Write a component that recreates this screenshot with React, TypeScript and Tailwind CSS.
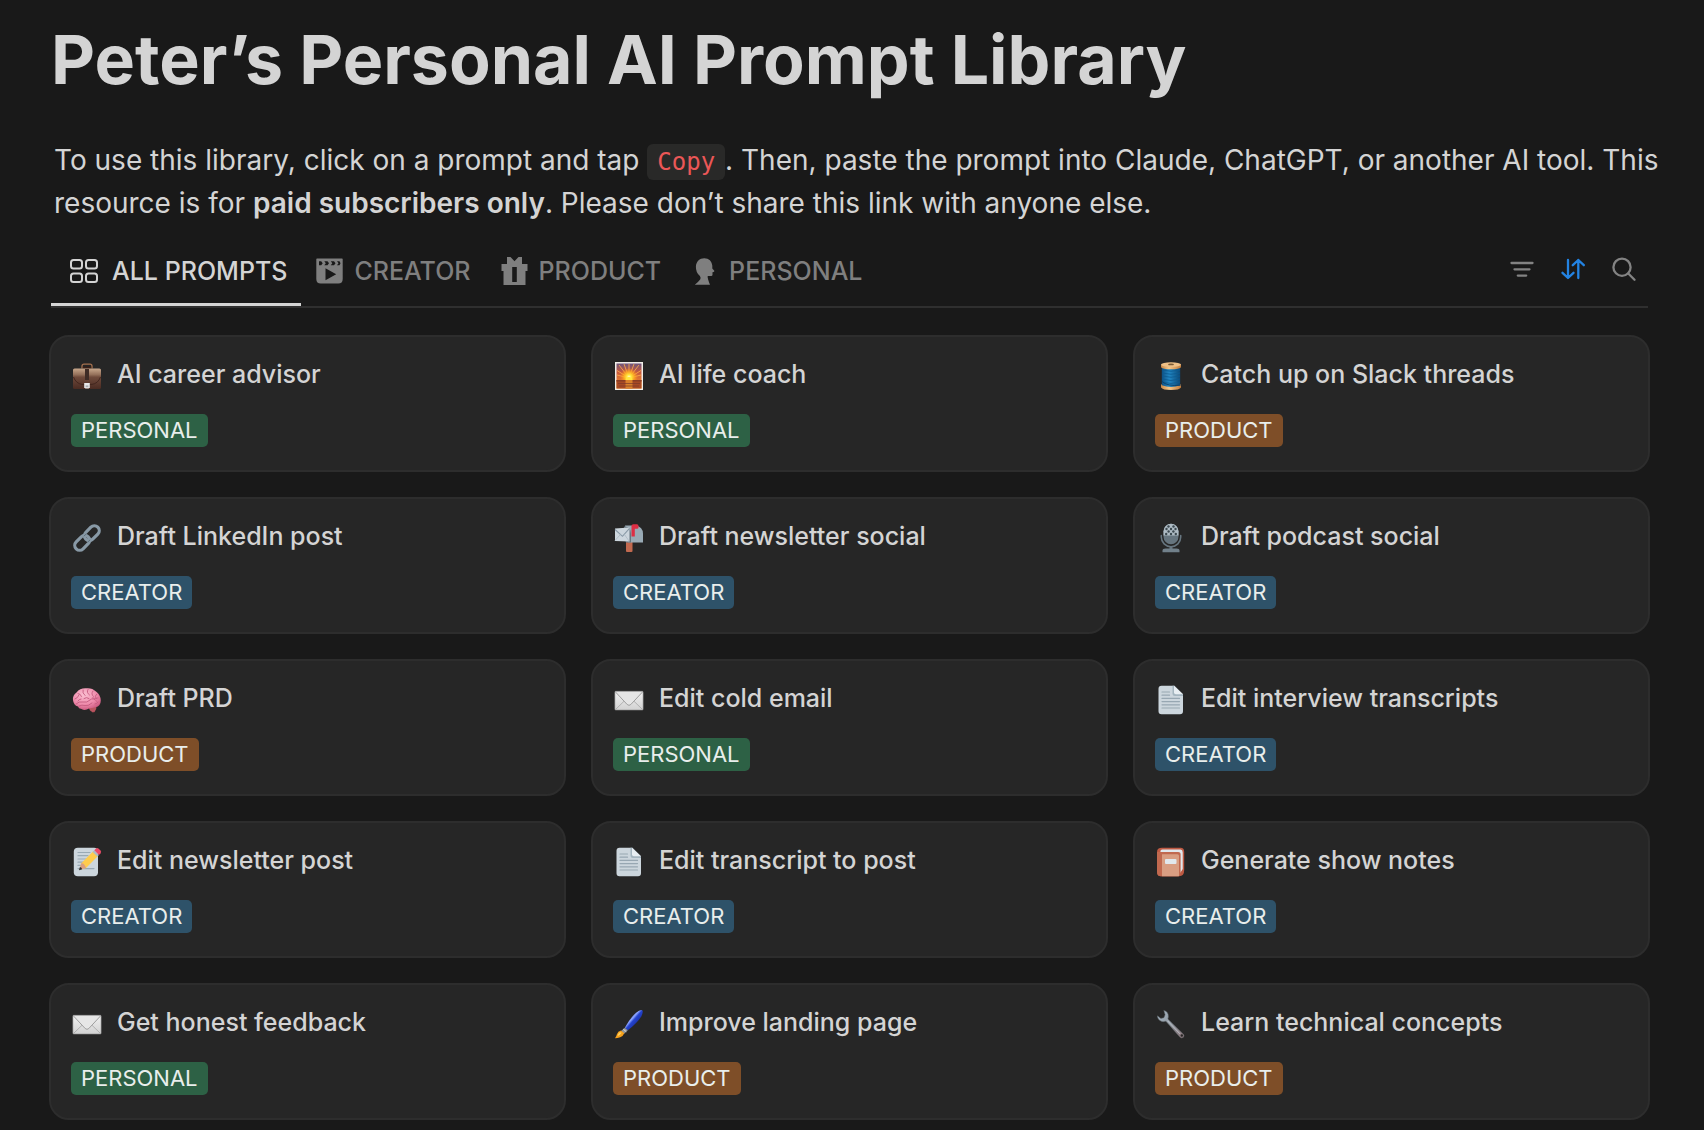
import { useState, type ReactNode } from "react";

type Tag = "PERSONAL" | "CREATOR" | "PRODUCT";

function Emoji({ label, children }: { label: string; children: ReactNode }) {
  return (
    <svg role="img" aria-label={label} viewBox="0 0 30 30" className="mt-1 size-[30px] shrink-0">
      {children}
    </svg>
  );
}

function Briefcase() {
  return (
    <Emoji label="Briefcase">
      <defs>
        <linearGradient id="bc-body" x1="0" y1="0" x2="0" y2="1">
          <stop offset="0" stopColor="#c9a88c" />
          <stop offset=".3" stopColor="#94705a" />
          <stop offset=".42" stopColor="#6f4a3b" />
          <stop offset="1" stopColor="#4a2b22" />
        </linearGradient>
      </defs>
      <path d="M10 7.500V5.200Q10 3.200 12 3.200h6q2 0 2 2v2.300" fill="none" stroke="#a5714f" strokeWidth="1.300" />
      <path d="M10.800 5.600h8.400v2h-8.400z" fill="#3b2017" />
      <rect x="1" y="7.500" width="28" height="20.500" rx="1.600" fill="url(#bc-body)" />
      <path d="M1.500 16Q4 22.600 10 23.400h10q6-.8 8.500-7.400" fill="none" stroke="#3f241c" strokeWidth=".9" />
      <path d="M13 8h4v11h-4z" fill="#3f2c26" />
      <path d="M12.200 22h5.600v4.200l-1.200 1.300h-3.200l-1.200-1.300z" fill="#e9e9ea" />
      <path d="M13.600 24.400h2.800v1.800h-2.800z" fill="#aeb0b3" />
    </Emoji>
  );
}

function Sunrise() {
  return (
    <Emoji label="Sunrise">
      <defs>
        <linearGradient id="sr-sky" x1="0" y1="0" x2="0" y2="1">
          <stop offset="0" stopColor="#6c547d" />
          <stop offset=".35" stopColor="#c9583c" />
          <stop offset="1" stopColor="#fb9a22" />
        </linearGradient>
        <radialGradient id="sr-sun" cx=".5" cy=".5" r=".5">
          <stop offset="0" stopColor="#fffbd0" />
          <stop offset=".25" stopColor="#ffe83b" />
          <stop offset=".6" stopColor="#ffad20" stopOpacity=".8" />
          <stop offset="1" stopColor="#ff8a1e" stopOpacity="0" />
        </radialGradient>
      </defs>
      <rect x="1" y="1" width="28" height="28" fill="#f2eee8" />
      <rect x="2.500" y="2.500" width="25" height="25" fill="url(#sr-sky)" />
      <g stroke="#ffb04a" strokeWidth="1" opacity=".8">
        <path d="M15 17 3 14M15 17 3 9.500M15 17 5 4M15 17 10 3M15 17V3M15 17 20 3M15 17 25 4M15 17 27 9.500M15 17l12-3" />
      </g>
      <circle cx="15" cy="16" r="9" fill="url(#sr-sun)" />
      <path d="M2.500 19h25v8.500h-25z" fill="#a84a24" />
      <path d="M2.500 19h25v1.500h-25z" fill="#8a3d24" />
      <path d="M11.500 19h7v8.500h-7z" fill="#d9812b" />
      <path d="M4 22.500h22M5 25h20" stroke="#7b3a2a" strokeWidth=".7" />
      <path d="M11.500 18.900a3.500 3 0 0 1 7 0z" fill="#ffe53c" />
    </Emoji>
  );
}

function Thread() {
  return (
    <Emoji label="Thread">
      <defs>
        <linearGradient id="th-blue" x1="0" x2="1">
          <stop offset="0" stopColor="#0e4f82" />
          <stop offset=".4" stopColor="#2187c4" />
          <stop offset="1" stopColor="#0b4876" />
        </linearGradient>
        <linearGradient id="th-wood" x1="0" x2="1">
          <stop offset="0" stopColor="#c98745" />
          <stop offset=".4" stopColor="#f4c78a" />
          <stop offset="1" stopColor="#c07b3b" />
        </linearGradient>
      </defs>
      <path d="M5 23.500q10-3 20 0v3q-1.500 2.500-10 2.500T5 26.500z" fill="url(#th-wood)" />
      <path d="M5.800 5.500h18.400v18.800q-9.200 3.200-18.400 0z" fill="url(#th-blue)" />
      <path d="M6 9q9 2.500 18 0M6 12q9 2.500 18 0M6 15q9 2.500 18 0M6 18q9 3 18 0M6 21q9 3 18 0" fill="none" stroke="#0b5a92" strokeWidth=".8" />
      <path d="M6 20.500q5 5 18.600 3.700" fill="none" stroke="#0a3e66" strokeWidth=".9" />
      <path d="M5 3.500v2.700Q7 8.300 15 8.300t10-2.100V3.500z" fill="url(#th-wood)" />
      <ellipse cx="15" cy="3.600" rx="10" ry="2.400" fill="#efc086" />
      <ellipse cx="15" cy="3.400" rx="3" ry=".9" fill="#7b5a35" />
    </Emoji>
  );
}

function Link() {
  return (
    <Emoji label="Link">
      <g fill="none" stroke="#8899a6" strokeWidth="3.200">
        <rect x="-8.500" y="-4.900" width="17" height="9.800" rx="4.900" transform="translate(19.800 10.200) rotate(-45)" />
        <rect x="-8.500" y="-4.900" width="17" height="9.800" rx="4.900" transform="translate(10.200 19.800) rotate(-45)" />
      </g>
      <path d="m11.800 13.200 2.600-2.400M18.200 16.800l-2.600 2.400" stroke="#5f707c" strokeWidth="1" />
    </Emoji>
  );
}

function Mailbox() {
  return (
    <Emoji label="Mailbox">
      <path d="M12 19h6.500v9q0 1-1 1H13q-1 0-1-1z" fill="#c1694f" />
      <path d="M11 2.500h10.500Q29 3.500 29 11v8.500H14z" fill="#99aab5" />
      <path d="M10 3.500q7 0 7 7v9h-5q-3-8-2-16z" fill="#67757f" />
      <path d="M1 5.500 15.500 4.500v14L1 18z" fill="#ccd6dd" />
      <path d="m1 6.500 7.500 6.800 7-8" fill="none" stroke="#8899a6" strokeWidth="1.100" />
      <path d="m1 17.500 5.500-6M15 18l-4.500-6.500" stroke="#aab8c2" strokeWidth=".8" />
      <path d="M17.500 3q0-1.800 1.800-1.800H23q1.500 0 1.500 1.800v1.500q0 1.300-1.500 1.300h-2.200v7.700h-3.300z" fill="#dd2e44" />
    </Emoji>
  );
}

function Microphone() {
  const dots = [
    [12.500, 3.500], [17.500, 3.500], [10.500, 6], [15, 6], [19.500, 6],
    [12.600, 8.500], [17.400, 8.500], [10.200, 11], [15, 11], [19.800, 11],
  ];
  return (
    <Emoji label="Studio microphone">
      <rect x="7.500" y=".8" width="15" height="20.500" rx="7.500" fill="#66757f" />
      <path d="M7.500 12.500V8.300a7.500 7.500 0 0 1 15 0v4.200z" fill="#aebbc4" />
      {dots.map(([x, y]) => (
        <circle key={`${x}-${y}`} cx={x} cy={y} r="1.200" fill="#3c4950" />
      ))}
      <path d="M5.300 12.500V14a9.700 9.700 0 0 0 19.400 0v-1.500" fill="none" stroke="#66757f" strokeWidth="1.600" strokeLinecap="round" />
      <path d="M13.500 23h3v3h-3z" fill="#66757f" />
      <path d="M6.500 29.200v-1.500q0-2.200 3-2.200h11q3 0 3 2.200v1.500z" fill="#71808a" />
    </Emoji>
  );
}

function Brain() {
  return (
    <Emoji label="Brain">
      <defs>
        <radialGradient id="br-pink" cx=".4" cy=".3" r=".75">
          <stop offset="0" stopColor="#fbc0d2" />
          <stop offset=".6" stopColor="#ee8bab" />
          <stop offset="1" stopColor="#c9557c" />
        </radialGradient>
      </defs>
      <path d="M15.500 21.500q4 3 5 6l2.500-.5-1-5z" fill="#a7484f" />
      <path d="M17 22q4.500-2 7.500.5-.5 4-4 4.500-3.500-1-3.500-5z" fill="#b95560" />
      <path d="M1 15Q.5 10 4.500 7.500 8 3 14 3.300q6-.8 10 3.200 4.500 3 4.800 9 0 5.500-5.300 6.800-4 1-6.500 1.200Q13 26 9.500 24q-3-.2-3.500-2.600Q1.500 20.500 1 15z" fill="url(#br-pink)" />
      <g fill="none" stroke="#c55b80" strokeWidth=".9" strokeLinecap="round">
        <path d="M3 14q3-1 4-4M6 8.500q2.500 0 3.500 3M11 5q-1 3 2 5.500M16 4.500q-2 3 1.500 5.500M21 6q-2.500 3 .5 5.500M25 9q-3 2-.5 5" />
        <path d="M4 19q3-3 7-2t7-2 7 1.500M7 21q3-1.500 6-.5t7-2.500M12 13.500q2.500-2 5 0M9 14q-2 0-3 2M20.500 13q2 1 5.500 0M23 19q2 0 3-2" />
      </g>
    </Emoji>
  );
}

function Envelope() {
  return (
    <Emoji label="Envelope">
      <defs>
        <linearGradient id="en-paper" x1="0" y1="0" x2="0" y2="1">
          <stop offset="0" stopColor="#f1f1f1" />
          <stop offset="1" stopColor="#d2d2d2" />
        </linearGradient>
      </defs>
      <rect x=".9" y="6.300" width="28.200" height="18.700" rx=".8" fill="url(#en-paper)" stroke="#8f8f8f" strokeWidth=".6" />
      <path d="m1.500 24.500 9.800-9.500M28.500 24.500l-9.800-9.500" stroke="#a6a6a6" strokeWidth=".8" />
      <path d="m1.500 7 11.700 12.500q1.800 1.700 3.600 0L28.500 7" fill="#e6e6e6" stroke="#969696" strokeWidth=".9" />
    </Emoji>
  );
}

function Page() {
  return (
    <Emoji label="Page">
      <path d="M5.500.8h12.800l8.700 8.700v16.700q0 3-3 3H5.500q-3 0-3-3V3.800q0-3 3-3z" fill="#ccd6dd" />
      <path d="M16.500.8v7.700q0 2.500 2.500 2.500h8V9.500L18.300.8z" fill="#a4b5bf" />
      <path d="M18 .8v6.700q0 1.800 1.800 1.800H27z" fill="#e8eef2" />
      <path d="M6 7h7.500M6 10.200h7.500M6 13.400h17.500M6 16.600h17.500M6 19.800h17.500M6 23h17.500" stroke="#97a7b2" strokeWidth="1.200" strokeLinecap="round" />
    </Emoji>
  );
}

function Memo() {
  return (
    <Emoji label="Memo">
      <rect x="1.800" y=".8" width="24.200" height="28.400" rx="4" fill="#ccd6dd" />
      <path d="M6 5.500h12M6 8.700h10M6 12h10M6 15.200h7M6 18.400h4M6 21.600h16" stroke="#99aab5" strokeWidth="1.200" strokeLinecap="round" />
      <path d="m7.500 22.700 1.800-6.500L21.500 4l4.700 4.700L14 20.900z" fill="#ffcc4d" />
      <path d="m7.500 22.700 1.800-6.500q3-.5 4.700 4.700z" fill="#d99e82" />
      <path d="M7 23.200l.9-3.200q1.800.3 2.300 2.300z" fill="#292f33" />
      <path d="m20.600 4.900 1.700-1.700L27 7.900l-1.700 1.700z" fill="#aebbc4" />
      <path d="M22.300 3.200 24 1.500q1.300-1 2.700.2l1.800 1.800q1.200 1.300.1 2.700L27 7.900z" fill="#ea4a66" />
    </Emoji>
  );
}

function Notebook() {
  return (
    <Emoji label="Notebook">
      <path d="M6 .8h18.500q3.700 0 3.700 4V23q0 6.200-5 6.200H5q-4 0-4-4.500V5Q1 .8 6 .8z" fill="#be5a43" />
      <path d="M6.500 2.600h18q2.200 0 2.200 2.600V22l-2.500 4V5.800H4.500q-.5-3.200 2-3.200z" fill="#e1e8ed" />
      <path d="M4 5h18q2.500 0 2.500 2.500V26q0 3.200-3 3.200H5q-4 0-4-4.500V5z" fill="#c1694f" />
      <path d="M6 7.200h15.500q1.500 0 1.500 1.500v20.500H6z" fill="#d99e82" />
      <rect x="9" y="12" width="11.500" height="5" rx="1" fill="#e1e8ed" />
    </Emoji>
  );
}

function Paintbrush() {
  return (
    <Emoji label="Paintbrush">
      <defs>
        <linearGradient id="pb-blue" x1="0" y1="0" x2="1" y2="1">
          <stop offset=".2" stopColor="#1b2f9c" />
          <stop offset=".42" stopColor="#8ea6ff" />
          <stop offset=".5" stopColor="#2443d0" />
          <stop offset="1" stopColor="#0c1450" />
        </linearGradient>
      </defs>
      <path d="M28.300 1.300q1.200 1.500-1 6.200-4.500 7-13.500 13.800l-3-2.500Q16 9 22 3.700q4.800-3.900 6.300-2.400z" fill="url(#pb-blue)" />
      <path d="m10.800 18.800 3 2.500-3.600 3.400-3.200-2.700z" fill="#8f959b" />
      <path d="m9.300 20.200 3 2.500" stroke="#d8dcdf" strokeWidth="1" />
      <path d="M7 21.500 10.300 24.300q-1.200 3-4.100 4-2.800.8-5.200.9 1.400-1.700 1.900-4 .9-3 4.100-3.700z" fill="#f6a11d" />
      <path d="M5.800 23.200q-1.900 1.500-2.300 4 2.500-1.200 4.200-3.400z" fill="#ffd566" />
    </Emoji>
  );
}

function Wrench() {
  return (
    <Emoji label="Wrench">
      <defs>
        <linearGradient id="wr-steel" x1="0" y1="0" x2="1" y2="1">
          <stop offset="0" stopColor="#a9bccb" />
          <stop offset=".5" stopColor="#8d949b" />
          <stop offset="1" stopColor="#8b7377" />
        </linearGradient>
      </defs>
      <path d="M7.800 1.400q4.700 1.200 4.600 6-.1 1.500-.5 2.500l14.800 14.600q2.200 1.600.8 3.700-1.800 1.800-3.800-.3L9.900 12.200q-2 .8-4.200.2Q1.500 11 1.400 6.800l3.500 2.600 3-.7 1.200-3z" fill="url(#wr-steel)" stroke="#5a6065" strokeWidth=".5" />
      <path d="m11.500 11.800 12.500 13" stroke="#c9d1d8" strokeWidth=".8" />
      <circle cx="25.800" cy="26.500" r="1.200" fill="#262626" />
    </Emoji>
  );
}

const prompts: { title: string; tag: Tag; icon: () => ReactNode }[] = [
  { title: "AI career advisor", tag: "PERSONAL", icon: Briefcase },
  { title: "AI life coach", tag: "PERSONAL", icon: Sunrise },
  { title: "Catch up on Slack threads", tag: "PRODUCT", icon: Thread },
  { title: "Draft LinkedIn post", tag: "CREATOR", icon: Link },
  { title: "Draft newsletter social", tag: "CREATOR", icon: Mailbox },
  { title: "Draft podcast social", tag: "CREATOR", icon: Microphone },
  { title: "Draft PRD", tag: "PRODUCT", icon: Brain },
  { title: "Edit cold email", tag: "PERSONAL", icon: Envelope },
  { title: "Edit interview transcripts", tag: "CREATOR", icon: Page },
  { title: "Edit newsletter post", tag: "CREATOR", icon: Memo },
  { title: "Edit transcript to post", tag: "CREATOR", icon: Page },
  { title: "Generate show notes", tag: "CREATOR", icon: Notebook },
  { title: "Get honest feedback", tag: "PERSONAL", icon: Envelope },
  { title: "Improve landing page", tag: "PRODUCT", icon: Paintbrush },
  { title: "Learn technical concepts", tag: "PRODUCT", icon: Wrench },
];

const tagColors: Record<Tag, string> = {
  PERSONAL: "bg-[#2d6145]",
  CREATOR: "bg-[#2e5269]",
  PRODUCT: "bg-[#7e4e28]",
};

function GridIcon() {
  return (
    <svg viewBox="0 0 28 24" className="h-6 w-7" fill="none" stroke="currentColor" strokeWidth="2" aria-hidden="true">
      <rect x="1" y="1" width="11" height="8.500" rx="2.500" />
      <rect x="16" y="1" width="11" height="8.500" rx="2.500" />
      <rect x="1" y="14.500" width="11" height="8.500" rx="2.500" />
      <rect x="16" y="14.500" width="11" height="8.500" rx="2.500" />
    </svg>
  );
}

function ClapperIcon() {
  return (
    <svg viewBox="0 0 27 26" className="h-[26px] w-[27px]" aria-hidden="true">
      <path
        fill="currentColor"
        fillRule="evenodd"
        d="M1 .5h25q.7 0 .7.700V21q0 4.500-4.500 4.500H4.800Q.3 25.500.3 21V1.200Q.3.500 1 .500zM3 3.200v4h2.200l1.500-2-1.500-2zM8.300 3.200l1.500 2-1.500 2h3.200l1.500-2-1.500-2zM14.800 3.200l1.500 2-1.500 2H18l1.500-2-1.500-2zM21 3.200l1.500 2-1.500 2h2.500l1-2-1-2zM9.500 10.200v12l10.700-6z"
      />
    </svg>
  );
}

function GiftIcon() {
  return (
    <svg viewBox="0 0 27 28" className="h-7 w-[27px]" aria-hidden="true">
      <path
        fill="currentColor"
        fillRule="evenodd"
        d="M6 0h3.500l4 4.300L17.500 0H21v7h5.500v7H24.500v14h-22V14H.5V7H6zM11.200 10v15h4.600V10z"
      />
    </svg>
  );
}

function HeadIcon() {
  return (
    <svg viewBox="0 0 20 27" className="h-[27px] w-[27px]" aria-hidden="true">
      <path
        fill="currentColor"
        d="M9.800.3c4.600 0 7.700 3 8 7.500v2.600l2 2.400q.3.900-.8 1.200l-1 .2v2.500q0 1.300-1.400 1.300h-3.400q-.4 2.200 2.300 8.800H.3q3.700-3 5.500-5.600.8-1.500-.4-3.200Q1.200 14.800 1.400 8.600C1.600 3.600 5 .3 9.800.3z"
      />
    </svg>
  );
}

const tabs: { name: string; icon: () => ReactNode }[] = [
  { name: "ALL PROMPTS", icon: GridIcon },
  { name: "CREATOR", icon: ClapperIcon },
  { name: "PRODUCT", icon: GiftIcon },
  { name: "PERSONAL", icon: HeadIcon },
];

const strokeProps = {
  fill: "none",
  stroke: "currentColor",
  strokeWidth: 2.3,
  strokeLinecap: "round" as const,
  strokeLinejoin: "round" as const,
  viewBox: "0 0 24 24",
  className: "size-6",
  "aria-hidden": true,
};

export default function App() {
  const [active, setActive] = useState("ALL PROMPTS");
  const shown = prompts.filter((p) => active === "ALL PROMPTS" || p.tag === active);

  return (
    <main className="min-h-screen bg-[#191919] pt-[17px] pr-[54px] pb-2 pl-[49px] font-['Inter',sans-serif] text-[#d4d4d4]">
      <h1 className="pl-0.5 text-[68px] leading-[84px] font-bold">Peter’s Personal AI Prompt Library</h1>

      <p className="mt-[38px] -mr-4 pl-[5px] text-[28px] leading-[43px]">
        To use this library, click on a prompt and tap{" "}
        <code className="rounded-md bg-[#292928] px-2.5 py-1 font-['DejaVu_Sans_Mono',monospace] text-2xl text-[#eb5757]">
          Copy
        </code>
        . Then, paste the prompt into Claude, ChatGPT, or another AI tool. This resource is for{" "}
        <strong className="font-semibold">paid subscribers only</strong>. Please don’t share this link with anyone else.
      </p>

      <div className="mt-5 mr-0.5 ml-0.5 flex items-stretch justify-between border-b-2 border-[#2f2f2f]">
        <div role="tablist" aria-label="Prompt views" className="flex">
          {tabs.map(({ name, icon: Icon }) => (
            <button
              key={name}
              type="button"
              role="tab"
              aria-selected={active === name}
              onClick={() => setActive(name)}
              className={
                active === name
                  ? "flex items-center gap-3.5 border-b-3 border-[#d4d4d4] pt-2.5 pr-3.5 pb-4 pl-[19px] text-[25px] leading-8 font-medium"
                  : "flex items-center gap-[11px] border-b-3 border-transparent px-[15px] pt-2.5 pb-4 text-[25px] leading-8 font-medium text-[#7f7f7f]"
              }
            >
              <Icon />
              {name}
            </button>
          ))}
        </div>
        <div className="flex items-center gap-[27px] pr-3 pb-[13px] text-[#838383]">
          <button type="button" aria-label="Filter">
            <svg {...strokeProps}>
              <path d="M1.500 6h21M4.500 12.300h15M7.800 18.600h8.400" />
            </svg>
          </button>
          <button type="button" aria-label="Sort" className="text-[#2383e2]">
            <svg {...strokeProps}>
              <path d="M7 3v18M1.500 15.800 7 21l5.500-5.200M17.300 21V3M11.800 8.200 17.300 3l5.500 5.200" />
            </svg>
          </button>
          <button type="button" aria-label="Search">
            <svg {...strokeProps}>
              <circle cx="10" cy="10.200" r="8.600" />
              <path d="m16.300 16.500 6.200 6.200" />
            </svg>
          </button>
        </div>
      </div>

      <ul className="mt-[27px] grid grid-cols-3 gap-[25px]">
        {shown.map(({ title, tag, icon: Icon }) => (
          <li key={title}>
            <a
              href="#"
              className="flex flex-col items-start gap-[21px] rounded-[20px] border-2 border-[#2d2d2d] bg-[#262626] px-5 pt-[18px] pb-[23px]"
            >
              <span className="flex items-center gap-[15px] pl-px text-[25px] leading-[38px] font-medium">
                <Icon />
                {title}
              </span>
              <span className={`rounded-[5px] px-2.5 text-[22px] leading-[33px] text-[#e9eeec] ${tagColors[tag]}`}>
                {tag}
              </span>
            </a>
          </li>
        ))}
      </ul>
    </main>
  );
}
